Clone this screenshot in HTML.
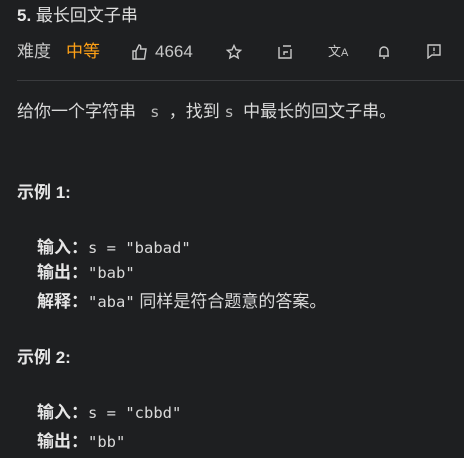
<!DOCTYPE html>
<html><head><meta charset="utf-8"><style>
body{margin:0;width:464px;height:458px;background:#1e1f21;color:#dadada;font-family:"Liberation Sans","Noto Sans CJK SC",sans-serif;overflow:hidden;position:relative}
.a{position:absolute;white-space:nowrap;line-height:22px;font-size:17px}
.m{font-family:"DejaVu Sans Mono","Liberation Mono",monospace;font-size:15.5px}
b{font-weight:bold;color:#e6e6e6}
svg{position:absolute}
</style></head><body>
<div class="a" style="left:17px;top:5px;color:#e0e0e0"><b>5.</b> 最长回文子串</div>
<div class="a" style="left:17px;top:41px;color:#c8c8c8">难度</div>
<div class="a" style="left:66px;top:41px;color:#ffa116">中等</div>
<svg style="left:131px;top:43px" width="18" height="18" viewBox="0 0 18 18" fill="none" stroke="#c8c8c8" stroke-width="1.4"><path d="M2 8h3v8H2zM5 8l3-6c2 0 2 2 1.5 4H15l-1.5 10H5"/></svg>
<div class="a" style="left:155px;top:41px;color:#c8c8c8">4664</div>
<svg style="left:226px;top:44px" width="16" height="16" viewBox="0 0 16 16" fill="none" stroke="#c8c8c8" stroke-width="1.4"><path d="M8 1.5l2 4.3 4.6.5-3.4 3.1 1 4.6L8 11.6 3.8 14l1-4.6L1.4 6.3 6 5.8z"/></svg>
<svg style="left:277px;top:44px" width="16" height="16" viewBox="0 0 16 16" fill="none" stroke="#c8c8c8" stroke-width="1.4"><path d="M2 3v11h12V5M6 2h8v0M10 2l4 0M11 8h-4v3"/></svg>
<div class="a" style="left:328px;top:41px;font-size:13px;color:#c8c8c8">文<span style="font-size:11px">A</span></div>
<svg style="left:376px;top:44px" width="16" height="16" viewBox="0 0 16 16" fill="none" stroke="#c8c8c8" stroke-width="1.4"><path d="M4 12V7a4 4 0 018 0v5zM3 12h10M7 14h2"/></svg>
<svg style="left:426px;top:43px" width="16" height="16" viewBox="0 0 16 16" fill="none" stroke="#c8c8c8" stroke-width="1.4"><path d="M2 2h12v10H6l-4 3zM8 4.5v3.5M8 9.5v1"/></svg>
<div style="position:absolute;left:17px;top:80px;width:447px;height:1px;background:#3a3b3e"></div>
<div class="a" style="left:17px;top:101px">给你一个字符串 <span class="m" style="color:#bbb">&nbsp;s&nbsp;</span>，找到 <span class="m" style="color:#bbb">s&nbsp;</span>中最长的回文子串。</div>
<div class="a" style="left:17px;top:182px"><b>示例 1:</b></div>
<div class="a" style="left:37px;top:237px"><b>输入：</b><span class="m">s = "babad"</span></div>
<div class="a" style="left:37px;top:262px"><b>输出：</b><span class="m">"bab"</span></div>
<div class="a" style="left:37px;top:291px"><b>解释：</b><span class="m">"aba"</span> 同样是符合题意的答案。</div>
<div class="a" style="left:17px;top:347px"><b>示例 2:</b></div>
<div class="a" style="left:37px;top:402px"><b>输入：</b><span class="m">s = "cbbd"</span></div>
<div class="a" style="left:37px;top:431px"><b>输出：</b><span class="m">"bb"</span></div>
</body></html>
